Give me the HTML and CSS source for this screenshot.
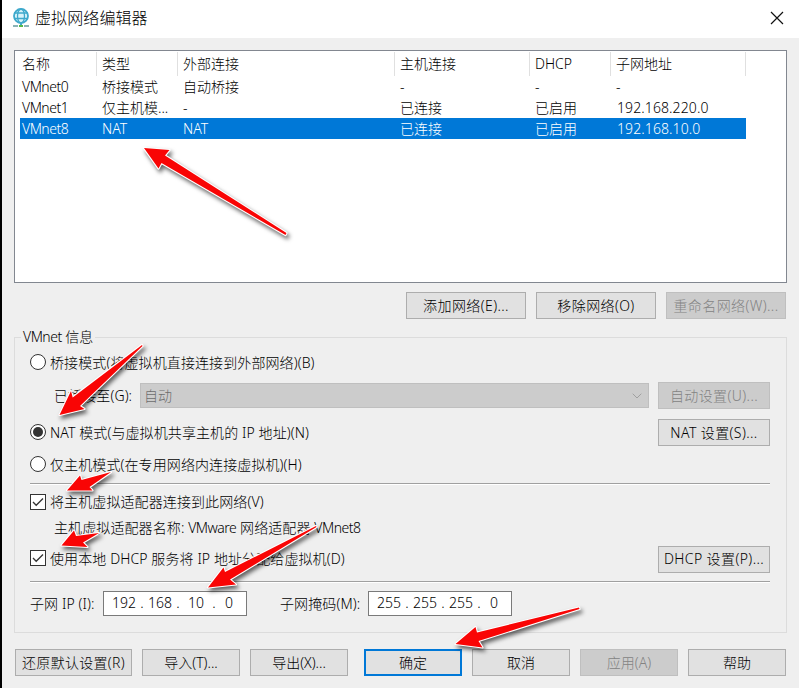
FILE: index.html
```html
<!DOCTYPE html>
<html lang="zh-CN">
<head>
<meta charset="utf-8">
<title>虚拟网络编辑器</title>
<link rel="stylesheet" href="styles.css">
</head>
<body>
<div class="window">
  <header class="titlebar">
    <svg class="app-icon" width="18" height="20" viewBox="0 0 18 20" fill="none">
      <circle cx="9" cy="8" r="7" fill="#d8f3fa" stroke="#3fa9cc" stroke-width="1.8"/>
      <ellipse cx="9" cy="8" rx="3.5" ry="7" stroke="#3fa9cc" stroke-width="1.3"/>
      <path d="M2 5h14M2 10.5h14" stroke="#3fa9cc" stroke-width="1.5"/>
      <path d="M9 15v3" stroke="#3fa9cc" stroke-width="2"/>
      <path d="M1 18h5M12 18h5" stroke="#669b9e" stroke-width="1.5"/>
      <path d="M7 18h4" stroke="#55b947" stroke-width="2"/>
    </svg>
    <h1>虚拟网络编辑器</h1>
    <svg class="close" width="14" height="14" viewBox="0 0 14 14"><path d="M1 1l12 12M13 1L1 13" stroke="#111" stroke-width="1.2"/></svg>
  </header>

  <main>
    <section class="list">
      <div class="row head"><span>名称</span><span>类型</span><span>外部连接</span><span>主机连接</span><span>DHCP</span><span>子网地址</span></div>
      <div class="row"><span class="vm">VMnet0</span><span>桥接模式</span><span>自动桥接</span><span>-</span><span>-</span><span>-</span></div>
      <div class="row"><span class="vm">VMnet1</span><span>仅主机模...</span><span>-</span><span>已连接</span><span>已启用</span><span class="addr">192.168.220.0</span></div>
      <div class="row selected"><span class="vm">VMnet8</span><span>NAT</span><span>NAT</span><span>已连接</span><span>已启用</span><span class="addr">192.168.10.0</span></div>
    </section>

    <div class="net-actions">
      <button class="wide">添加网络(E)...</button>
      <button class="wide">移除网络(O)</button>
      <button class="wide" disabled>重命名网络(W)...</button>
    </div>

    <fieldset>
      <legend><span class="vm">VMnet</span> 信息</legend>
      <div class="line bridge"><i class="radio"></i><span>桥接模式(将虚拟机直接连接到外部网络)(B)</span></div>
      <div class="line adapter">
        <span class="adapter-label">已桥接至(G):</span>
        <div class="combo"><span>自动</span><svg width="10" height="6" viewBox="0 0 10 6" fill="none"><path d="M.7.7L5 5 9.3.7" stroke="#a0a0a0"/></svg></div>
        <button class="side wide" disabled>自动设置(U)...</button>
      </div>
      <div class="line nat"><i class="radio on"></i><span>NAT 模式(与虚拟机共享主机的 IP 地址)(N)</span><button class="side wide">NAT 设置(S)...</button></div>
      <div class="line host"><i class="radio"></i><span>仅主机模式(在专用网络内连接虚拟机)(H)</span></div>
      <hr>
      <div class="line connect"><i class="check"><svg width="12" height="10" viewBox="0 0 12 10"><path d="M1 5l3.2 3.3L11 1.5" fill="none" stroke="#333" stroke-width="1.3"/></svg></i><span>将主机虚拟适配器连接到此网络(V)</span></div>
      <div class="line name"><span>主机虚拟适配器名称: <b class="vm">VMware</b> 网络适配器 <b class="vm">VMnet8</b></span></div>
      <div class="line dhcp"><i class="check"><svg width="12" height="10" viewBox="0 0 12 10"><path d="M1 5l3.2 3.3L11 1.5" fill="none" stroke="#333" stroke-width="1.3"/></svg></i><span>使用本地 DHCP 服务将 IP 地址分配给虚拟机(D)</span><button class="side wide">DHCP 设置(P)...</button></div>
      <hr>
      <div class="line subnet">
        <span class="ip-label">子网 IP (I):</span>
        <div class="ip"><span>192</span><i>.</i><span>168</span><i>.</i><span>10</span><i>.</i><span>0</span></div>
        <span class="mask-label">子网掩码(M):</span>
        <div class="ip"><span>255</span><i>.</i><span>255</span><i>.</i><span>255</span><i>.</i><span>0</span></div>
      </div>
    </fieldset>

    <footer>
      <button class="restore wide">还原默认设置(R)</button>
      <button>导入(T)...</button>
      <button>导出(X)...</button>
      <button class="ok">确定</button>
      <button>取消</button>
      <button disabled>应用(A)</button>
      <button>帮助</button>
    </footer>
  </main>

  <svg class="arrows" width="799" height="688" viewBox="0 0 799 688">
    <path d="M144 148L169.5 150 165 155.5 286.5 233 285.5 235 161.500 163 158.500 168.500Z"/>
    <path d="M142 345L72.700 397.500 71 391 59.500 415 84.500 409 80 406 142.500 346Z"/>
    <path d="M111 472L81.500 480 80 475.500 67 490.500 92.500 490.500 89.500 487Z"/>
    <path d="M99 533L76 536 74 530.500 61.500 545.500 87.500 547 83 542.500Z"/>
    <path d="M316 526L225 572 223.500 567.500 208 587.500 236 584.500 230 579.500 316.500 527Z"/>
    <path d="M579 607.500L477 632.500 475.500 627 455.500 644 482.500 647.500 478.500 641 579.500 609Z"/>
  </svg>
</div>
</body>
</html>
```
FILE: styles.css
```css
* { box-sizing: border-box; }

body {
  margin: 0;
  font: 300 14px/18px "Noto Sans", "Noto Sans CJK SC", sans-serif;
  color: #000;
}

.window {
  position: relative;
  width: 799px;
  height: 688px;
  border-left: 2px solid #000;
  background: #efefef;
  overflow: hidden;
  white-space: nowrap;
}

.titlebar {
  display: flex;
  align-items: center;
  height: 38px;
  padding: 0 15px 2px 10px;
  background: #fff;
}
.titlebar h1 {
  margin: 0 auto 0 5px;
  font-size: 16px;
  font-weight: 300;
  line-height: 20px;
  letter-spacing: 0.1px;
}

main { padding: 12px 12px 0; }

.list {
  height: 233px;
  padding: 1px 0 0 5px;
  border: 1px solid #828790;
  background: #fff;
}
.row {
  display: grid;
  grid-template-columns: 77px 81px 217px 135px 81px 135px;
  width: 726px;
  height: 21px;
  line-height: 21px;
}
.row span { padding-left: 5px; }
.row span:first-child { padding-left: 2px; }
.row .addr { padding-left: 6px; letter-spacing: 0.1px; }
.head {
  height: 24px;
  line-height: 24px;
}
.head span { border-right: 1px solid #e0e0e0; }
.selected { background: #0078d7; color: #fff; }
.vm { letter-spacing: -0.5px; font-weight: inherit; }

button {
  height: 27px;
  padding: 0;
  border: 1px solid #adadad;
  border-radius: 0;
  background: #e1e1e1;
  color: #000;
  font: inherit;
  white-space: nowrap;
}
button:disabled {
  border-color: #bfbfbf;
  background: #ccc;
  color: #838383;
}
.wide { letter-spacing: 0.4px; }
.restore.wide { letter-spacing: 0.3px; }

.net-actions {
  display: flex;
  justify-content: flex-end;
  gap: 10px;
  margin: 9px 1px 9px 0;
}
.net-actions button { width: 120px; }

fieldset {
  width: 773px;
  height: 305px;
  margin: 0;
  padding: 0 16px 0 15px;
  border: 1px solid #dcdcdc;
}
legend {
  height: 18px;
  margin-left: -9px;
  padding: 0 2px;
}

.line { display: flex; align-items: center; }
.line > span { letter-spacing: 0.1px; }
.bridge { height: 34px; }
.adapter { height: 31px; padding-left: 24px; }
.nat { height: 43px; }
.host { height: 21px; margin-bottom: 8px; }
.connect { height: 34px; }
.name { height: 18px; padding-left: 24px; }
.dhcp { height: 44px; }
.subnet { height: 41px; }

hr {
  height: 2px;
  margin: 0;
  border: 0;
  border-top: 1px solid #a0a0a0;
  background: #fff;
}

.radio {
  display: grid;
  place-items: center;
  width: 16px;
  height: 16px;
  margin: 0 4px 2px 0;
  border: 1px solid #333;
  border-radius: 50%;
  background: #fff;
}
.radio.on::after {
  content: "";
  width: 10px;
  height: 10px;
  border-radius: 50%;
  background: #333;
}
.check {
  display: grid;
  place-items: center;
  width: 16px;
  height: 16px;
  margin-right: 4px;
  border: 1px solid #333;
  background: #fff;
}
.dhcp .check { margin-bottom: 2px; }
.side { width: 112px; margin-left: auto; }

.adapter-label { width: 86px; }
.combo {
  display: flex;
  align-items: center;
  justify-content: space-between;
  width: 509px;
  height: 25px;
  padding: 0 6px 0 3px;
  border: 1px solid #bfbfbf;
  background: #ccc;
  color: #6d6d6d;
}

.ip-label { width: 73px; }
.mask-label { width: 88px; margin-left: 33px; }
.ip {
  display: grid;
  grid-template-columns: 26px 10px 26px 10px 26px 10px 20px;
  width: 144px;
  height: 25px;
  padding-left: 7px;
  border: 1px solid #7a7a7a;
  background: #fff;
  line-height: 22px;
  text-align: center;
}
.ip i { font-style: normal; }

footer {
  display: flex;
  gap: 10px;
  margin: 16px 0 0 1px;
}
footer button { width: 98px; }
footer .restore { width: 117px; }
footer .ok { margin-left: 6px; border: 2px solid #0078d7; }

.arrows {
  position: absolute;
  top: 0;
  left: -2px;
  pointer-events: none;
}
.arrows path {
  fill: #f90505;
  stroke: #fff;
  stroke-width: 2.2;
  stroke-linejoin: round;
  paint-order: stroke;
  filter: drop-shadow(2px 3px 2px rgba(0, 0, 0, 0.6));
}
```
